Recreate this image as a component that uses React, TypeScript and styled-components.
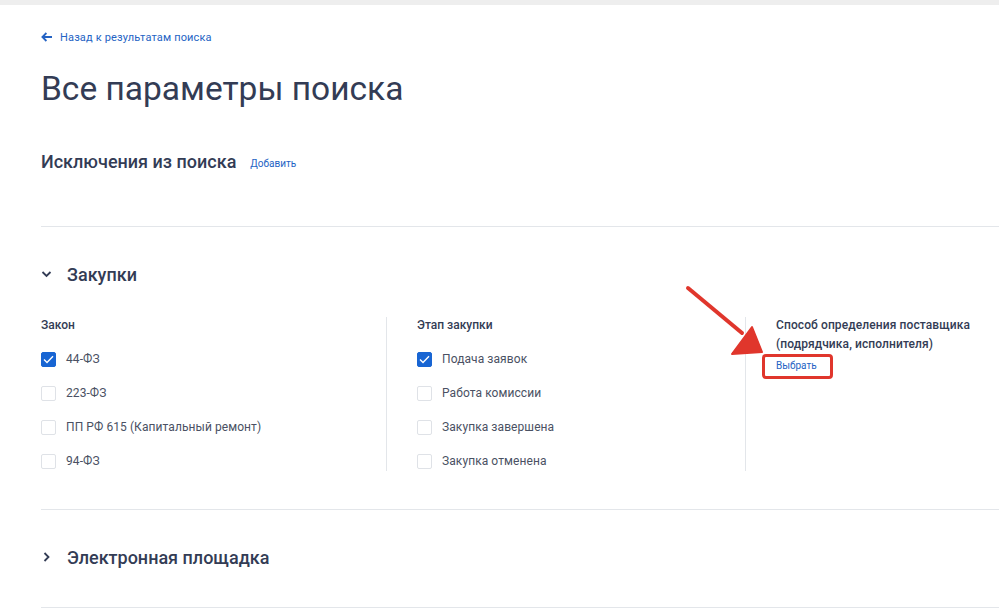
import React from 'react';
import styled, { createGlobalStyle } from 'styled-components';

const GlobalStyle = createGlobalStyle`
  html, body {
    margin: 0;
    padding: 0;
    background: #ffffff;
    font-family: Roboto, "Open Sans", Arial, sans-serif;
    -webkit-font-smoothing: antialiased;
  }
`;

const Page = styled.div`
  position: relative;
  width: 999px;
  height: 608px;
  overflow: hidden;
  background: #fff;
`;

const TopBar = styled.div`
  height: 5px;
  background: #eeeeee;
`;

const Content = styled.div`
  padding-left: 41px;
`;

const BackLink = styled.a`
  display: flex;
  align-items: center;
  gap: 7px;
  height: 24px;
  margin-top: 20px;
  font-size: 11px;
  letter-spacing: 0.15px;
  color: #2463c4;
  text-decoration: none;
`;

const Title = styled.h1`
  margin: 20px 0 0;
  font-size: 33.5px;
  line-height: 40px;
  font-weight: 400;
  color: #333c55;
`;

const HeadingRow = styled.div`
  display: flex;
  align-items: center;
  gap: 14px;
  height: 24px;
  margin-top: 40px;
`;

const SubTitle = styled.h2`
  margin: 0;
  font-size: 18px;
  font-weight: 500;
  color: #333c55;
`;

const SmallLink = styled.a`
  font-size: 10px;
  color: #2463c4;
  text-decoration: none;
  position: relative;
  top: 2px;
`;

const Divider = styled.div<{ top: number }>`
  height: 1px;
  background: #e3e6ea;
  margin-top: ${p => p.top}px;
`;

const SectionHeader = styled.div`
  display: flex;
  align-items: center;
  gap: 15px;
  height: 24px;
  margin-top: 35px;
  color: #333c55;
  font-size: 18px;
  font-weight: 500;
`;

const Columns = styled.div`
  display: grid;
  grid-template-columns: 345px 359px 1fr;
  margin-top: 31px;
`;

const Column = styled.div<{ first?: boolean }>`
  padding-left: ${p => (p.first ? 0 : 30)}px;
  border-left: ${p => (p.first ? 'none' : '1px solid #e3e6ea')};
`;

const ColumnLabel = styled.div`
  font-size: 12px;
  line-height: 16px;
  font-weight: 500;
  color: #333c55;
`;

const WideLabel = styled(ColumnLabel)`
  line-height: 19px;
  margin-top: -1px;
  letter-spacing: 0.1px;
`;

const List = styled.div`
  display: flex;
  flex-direction: column;
  gap: 14px;
  margin-top: 16px;
`;

const Row = styled.label`
  display: flex;
  align-items: center;
  gap: 10px;
  height: 20px;
  font-size: 12px;
  letter-spacing: 0.08px;
  color: #4a5163;
`;

const Box = styled.span<{ checked?: boolean }>`
  box-sizing: border-box;
  width: 15px;
  height: 15px;
  border-radius: 2px;
  display: flex;
  align-items: center;
  justify-content: center;
  background: ${p => (p.checked ? '#1865d3' : '#fff')};
  border: 1px solid ${p => (p.checked ? '#1865d3' : '#dfe2e7')};
`;

const PickWrap = styled.div`
  position: relative;
  display: inline-block;
  margin-top: 4px;
  font-size: 10px;
  line-height: 14px;
  color: #2463c4;
`;

const Highlight = styled.span`
  position: absolute;
  left: -14px;
  top: -5px;
  width: 71px;
  height: 25px;
  box-sizing: border-box;
  border: 3px solid #e0362c;
  border-radius: 4px;
`;

const ArrowOverlay = styled.svg`
  position: absolute;
  left: 0;
  top: 0;
  pointer-events: none;
`;

const Check = () => (
  <svg width="11" height="9" viewBox="0 0 11 9">
    <path d="M1 4.6 L4 7.4 L10 1.2" fill="none" stroke="#fff" strokeWidth="1.4" />
  </svg>
);

const CheckRow = ({ text, checked }: { text: string; checked?: boolean }) => (
  <Row>
    <Box checked={checked}>{checked && <Check />}</Box>
    {text}
  </Row>
);

const App = () => {
  const laws = [
    { text: '44-ФЗ', checked: true },
    { text: '223-ФЗ' },
    { text: 'ПП РФ 615 (Капитальный ремонт)' },
    { text: '94-ФЗ' },
  ];
  const stages = [
    { text: 'Подача заявок', checked: true },
    { text: 'Работа комиссии' },
    { text: 'Закупка завершена' },
    { text: 'Закупка отменена' },
  ];

  return (
    <Page>
      <GlobalStyle />
      <TopBar />
      <Content>
        <BackLink href="#">
          <svg width="12" height="10" viewBox="0 0 12 10">
            <path d="M11 5 H1.8 M5.4 1 L1.4 5 L5.4 9" fill="none" stroke="#2463c4" strokeWidth="1.8" />
          </svg>
          Назад к результатам поиска
        </BackLink>
        <Title>Все параметры поиска</Title>
        <HeadingRow>
          <SubTitle>Исключения из поиска</SubTitle>
          <SmallLink href="#">Добавить</SmallLink>
        </HeadingRow>
        <Divider top={53} />

        <SectionHeader>
          <svg width="11" height="8" viewBox="0 0 11 8">
            <path d="M1.5 2 L5.5 6 L9.5 2" fill="none" stroke="#333c55" strokeWidth="1.8" />
          </svg>
          Закупки
        </SectionHeader>
        <Columns>
          <Column first>
            <ColumnLabel>Закон</ColumnLabel>
            <List>
              {laws.map((l, i) => (
                <CheckRow key={i} text={l.text} checked={l.checked} />
              ))}
            </List>
          </Column>
          <Column>
            <ColumnLabel>Этап закупки</ColumnLabel>
            <List>
              {stages.map((s, i) => (
                <CheckRow key={i} text={s.text} checked={s.checked} />
              ))}
            </List>
          </Column>
          <Column>
            <WideLabel>
              Способ определения поставщика
              <br />
              (подрядчика, исполнителя)
            </WideLabel>
            <PickWrap>
              Выбрать
              <Highlight />
            </PickWrap>
          </Column>
        </Columns>
        <Divider top={38} />

        <SectionHeader>
          <svg width="11" height="10" viewBox="0 0 11 10">
            <path d="M3.5 1 L7.5 5 L3.5 9" fill="none" stroke="#333c55" strokeWidth="1.8" />
          </svg>
          Электронная площадка
        </SectionHeader>
        <Divider top={38} />
      </Content>

      <ArrowOverlay width="999" height="608" viewBox="0 0 999 608">
        <line x1="688" y1="288" x2="742" y2="333" stroke="#e0362c" strokeWidth="4" strokeLinecap="round" />
        <polygon points="732,354 752,327 762,352" fill="#e0362c" stroke="#e0362c" strokeWidth="2" strokeLinejoin="round" />
      </ArrowOverlay>
    </Page>
  );
};

export default App;
